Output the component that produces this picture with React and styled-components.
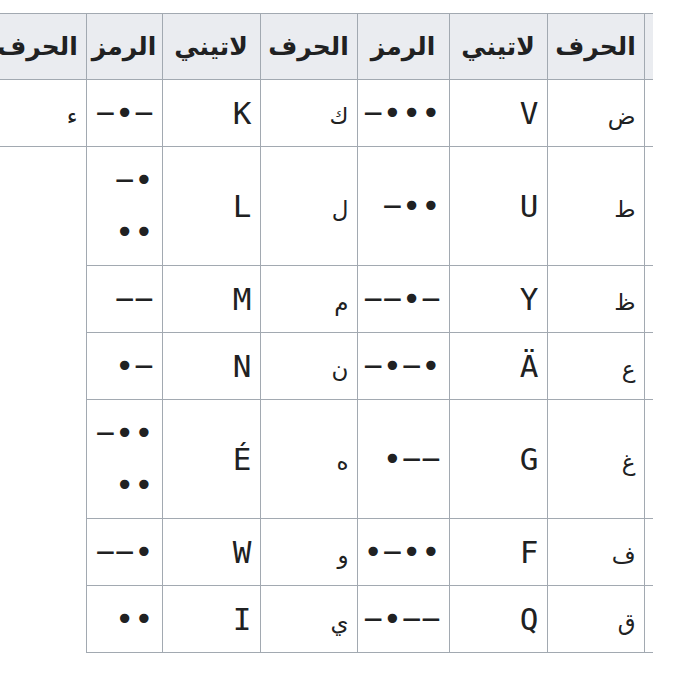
import React from 'react';
import styled, { createGlobalStyle } from 'styled-components';

const GlobalStyle = createGlobalStyle`
  html, body {
    margin: 0;
    background: #ffffff;
  }
`;

const widths = [9, 97, 98, 92, 97, 98, 76, 97, 98, 92];
const heads = ['الحرف', 'لاتيني', 'الرمز'];

// morse codes are in logical order; the rtl cell shows them reversed
const rows = [
  [
    { ar: 'ض', lat: 'V', code: ['•••−'] },
    { ar: 'ك', lat: 'K', code: ['−•−'] },
    { ar: 'ء', lat: '', code: [''] },
  ],
  [
    { ar: 'ط', lat: 'U', code: ['••−'] },
    { ar: 'ل', lat: 'L', code: ['•−', '••'] },
  ],
  [
    { ar: 'ظ', lat: 'Y', code: ['−•−−'] },
    { ar: 'م', lat: 'M', code: ['−−'] },
  ],
  [
    { ar: 'ع', lat: 'Ä', code: ['•−•−'] },
    { ar: 'ن', lat: 'N', code: ['−•'] },
  ],
  [
    { ar: 'غ', lat: 'G', code: ['−−•'] },
    { ar: 'ه', lat: 'É', code: ['••−', '••'] },
  ],
  [
    { ar: 'ف', lat: 'F', code: ['••−•'] },
    { ar: 'و', lat: 'W', code: ['•−−'] },
  ],
  [
    { ar: 'ق', lat: 'Q', code: ['−−•−'] },
    { ar: 'ي', lat: 'I', code: ['••'] },
  ],
];

const App = () => (
  <Page>
    <GlobalStyle />
    <Table>
      <colgroup>
        {widths.map((w, i) => (
          <Col key={i} $w={w} />
        ))}
      </colgroup>
      <thead>
        <tr>
          <HeadCell $spacer />
          {[0, 1, 2].map((g) =>
            heads.map((h) => <HeadCell key={g + h}>{h}</HeadCell>)
          )}
        </tr>
      </thead>
      <tbody>
        {rows.map((groups, r) => (
          <tr key={r}>
            <Cell $spacer />
            {groups.map((g) => (
              <React.Fragment key={g.ar}>
                <Cell>
                  <Letter>{g.ar}</Letter>
                </Cell>
                <Cell>{g.lat}</Cell>
                <Cell>
                  {g.code.map((line, i) => (
                    <React.Fragment key={i}>
                      {i > 0 && <br />}
                      <Morse>{line}</Morse>
                    </React.Fragment>
                  ))}
                </Cell>
              </React.Fragment>
            ))}
          </tr>
        ))}
      </tbody>
    </Table>
  </Page>
);

const Page = styled.div`
  direction: rtl;
  overflow: hidden;
  padding: 13px 32px 0 0;
  height: 690px;
  box-sizing: border-box;
`;

const Table = styled.table`
  border-collapse: collapse;
  table-layout: fixed;
  width: ${widths.reduce((a, b) => a + b, 0)}px;
  color: #202122;
`;

const Col = styled.col`
  width: ${(p) => p.$w}px;
`;

const HeadCell = styled.th`
  background: #eaecf0;
  border: 1px solid #a2a9b1;
  border-right: ${(p) => (p.$spacer ? 'none' : '1px solid #a2a9b1')};
  padding: 7px 2px;
  line-height: 51px;
  font-family: 'DejaVu Sans', sans-serif;
  font-size: 25px;
  font-weight: bold;
  text-align: center;
  white-space: nowrap;
  overflow: hidden;
`;

const Cell = styled.td`
  border: 1px solid #a2a9b1;
  border-right: ${(p) => (p.$spacer ? 'none' : '1px solid #a2a9b1')};
  padding: 7px 8px;
  line-height: 52px;
  font-family: 'DejaVu Sans Mono', monospace;
  font-size: 31px;
  text-align: right;
  vertical-align: middle;
  white-space: nowrap;
`;

const Letter = styled.span`
  font-family: 'DejaVu Sans', sans-serif;
  font-size: 23px;
  line-height: 1;
`;

const Morse = styled.span`
  font-family: 'DejaVu Sans Mono', monospace;
  font-size: 32px;
  line-height: 1;
`;

export default App;
